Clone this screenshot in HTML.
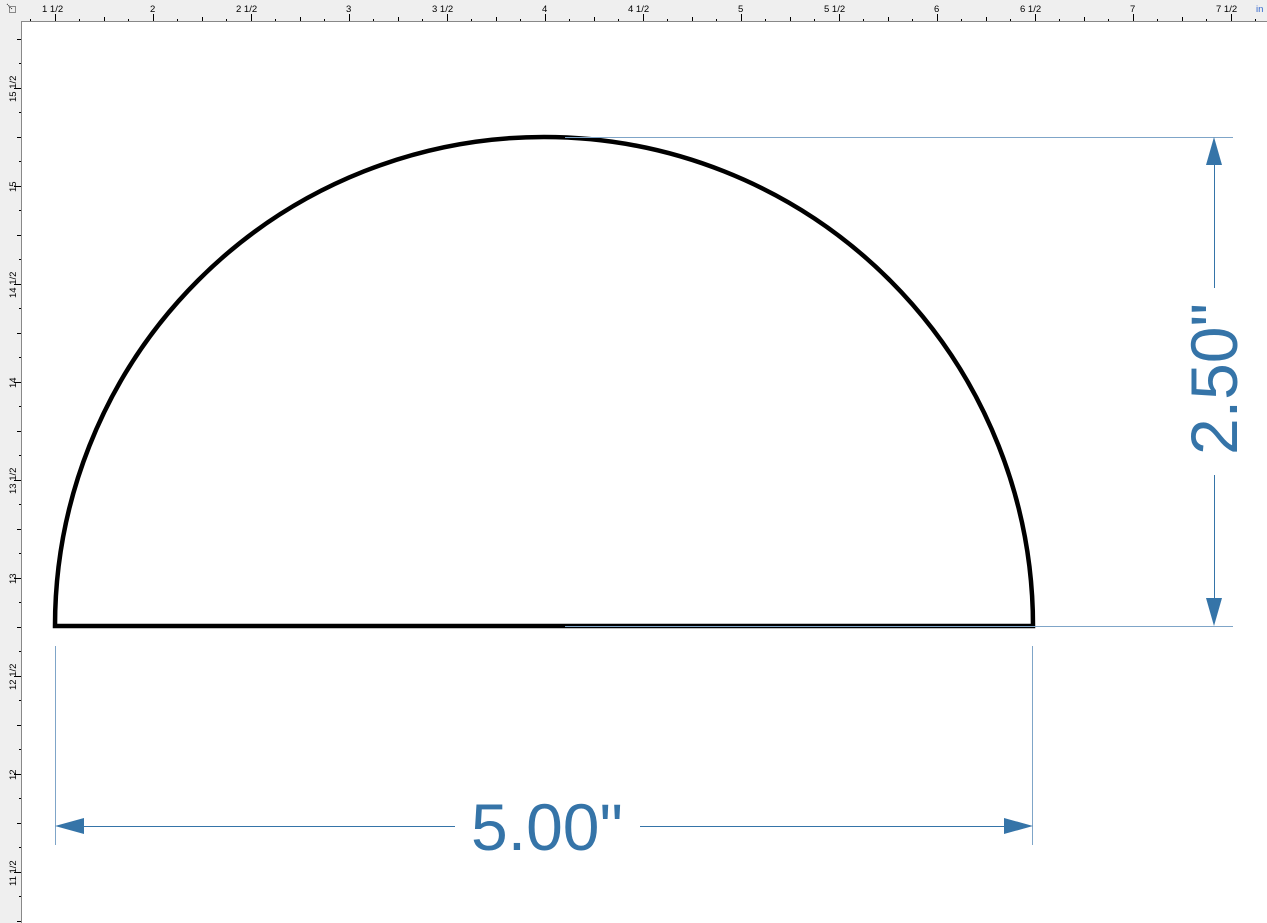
<!DOCTYPE html>
<html><head><meta charset="utf-8"><style>
html,body{margin:0;padding:0;background:#fff;width:1267px;height:923px;overflow:hidden}
svg{display:block}
text{font-family:"Liberation Sans",Arial,sans-serif}
</style></head><body>
<svg width="1267" height="923" viewBox="0 0 1267 923" xmlns="http://www.w3.org/2000/svg">
<rect x="0" y="0" width="1267" height="21" fill="#efefef"/>
<rect x="0" y="0" width="21" height="923" fill="#efefef"/>
<line x1="21" y1="21.5" x2="1267" y2="21.5" stroke="#888" stroke-width="1"/>
<line x1="21.5" y1="21" x2="21.5" y2="923" stroke="#888" stroke-width="1"/>
<g stroke="#000" stroke-width="1" fill="none">
<path d="M55.5,14V21M153.5,14V21M251.5,14V21M349.5,14V21M447.5,14V21M545.5,14V21M643.5,14V21M741.5,14V21M839.5,14V21M937.5,14V21M1035.5,14V21M1133.5,14V21M1231.5,14V21"/>
<path d="M104.5,17V21M202.5,17V21M300.5,17V21M398.5,17V21M496.5,17V21M594.5,17V21M692.5,17V21M790.5,17V21M888.5,17V21M986.5,17V21M1084.5,17V21M1182.5,17V21"/>
<path d="M30.5,19V21M79.5,19V21M128.5,19V21M177.5,19V21M226.5,19V21M275.5,19V21M324.5,19V21M373.5,19V21M422.5,19V21M471.5,19V21M520.5,19V21M569.5,19V21M618.5,19V21M667.5,19V21M716.5,19V21M765.5,19V21M814.5,19V21M863.5,19V21M912.5,19V21M961.5,19V21M1010.5,19V21M1059.5,19V21M1108.5,19V21M1157.5,19V21M1206.5,19V21M1255.5,19V21"/>
<path d="M14,88.5H21M14,186.5H21M14,284.5H21M14,382.5H21M14,480.5H21M14,578.5H21M14,676.5H21M14,774.5H21M14,872.5H21"/>
<path d="M17,39.5H21M17,137.5H21M17,235.5H21M17,333.5H21M17,431.5H21M17,529.5H21M17,627.5H21M17,725.5H21M17,823.5H21M17,921.5H21"/>
<path d="M19,63.5H21M19,112.5H21M19,161.5H21M19,210.5H21M19,259.5H21M19,308.5H21M19,357.5H21M19,406.5H21M19,455.5H21M19,504.5H21M19,553.5H21M19,602.5H21M19,651.5H21M19,700.5H21M19,749.5H21M19,798.5H21M19,847.5H21M19,896.5H21"/>
</g>
<g font-size="9.5" fill="#000">
<text x="42" y="12">1  1/2</text>
<text x="150" y="12">2</text>
<text x="236" y="12">2  1/2</text>
<text x="346" y="12">3</text>
<text x="432" y="12">3  1/2</text>
<text x="542" y="12">4</text>
<text x="628" y="12">4  1/2</text>
<text x="738" y="12">5</text>
<text x="824" y="12">5  1/2</text>
<text x="934" y="12">6</text>
<text x="1020" y="12">6  1/2</text>
<text x="1130" y="12">7</text>
<text x="1216" y="12">7  1/2</text>
<text x="1256" y="12" fill="#36c">in</text>
<text transform="translate(16,102) rotate(-90)">15  1/2</text>
<text transform="translate(16,192) rotate(-90)">15</text>
<text transform="translate(16,298) rotate(-90)">14  1/2</text>
<text transform="translate(16,388) rotate(-90)">14</text>
<text transform="translate(16,494) rotate(-90)">13  1/2</text>
<text transform="translate(16,584) rotate(-90)">13</text>
<text transform="translate(16,690) rotate(-90)">12  1/2</text>
<text transform="translate(16,780) rotate(-90)">12</text>
<text transform="translate(16,886) rotate(-90)">11  1/2</text>
</g>
<g stroke="#222" stroke-width="1" stroke-dasharray="1,1" fill="none"><rect x="9.5" y="6.5" width="6" height="6"/><path d="M7,4L12,9"/></g>
<path d="M55,626 L1033,626 A489,489 0 0 0 55,626 Z" fill="none" stroke="#000" stroke-width="4.5" stroke-linejoin="miter"/>
<g stroke="#3574a8" stroke-width="1" fill="none">
<line x1="565" y1="137.5" x2="1233" y2="137.5" stroke="#7fa5c8"/>
<line x1="565" y1="626.5" x2="1233" y2="626.5" stroke="#7fa5c8"/>
<line x1="1214.5" y1="150" x2="1214.5" y2="288"/>
<line x1="1214.5" y1="475" x2="1214.5" y2="612"/>
<line x1="55.5" y1="646" x2="55.5" y2="845" stroke="#7fa5c8"/>
<line x1="1032.5" y1="646" x2="1032.5" y2="845" stroke="#7fa5c8"/>
<line x1="70" y1="826.5" x2="455" y2="826.5"/>
<line x1="640" y1="826.5" x2="1018" y2="826.5"/>
</g>
<g fill="#3574a8">
<polygon points="1214,137 1206,165 1222,165"/>
<polygon points="1214,626 1206,598 1222,598"/>
<polygon points="55,826 84,818 84,834"/>
<polygon points="1033,826 1004,818 1004,834"/>
</g>
<text x="547" y="850" font-size="66" fill="#3574a8" text-anchor="middle">5.00"</text>
<text transform="translate(1237,379) rotate(-90)" font-size="66" fill="#3574a8" text-anchor="middle">2.50"</text>
</svg>
</body></html>
